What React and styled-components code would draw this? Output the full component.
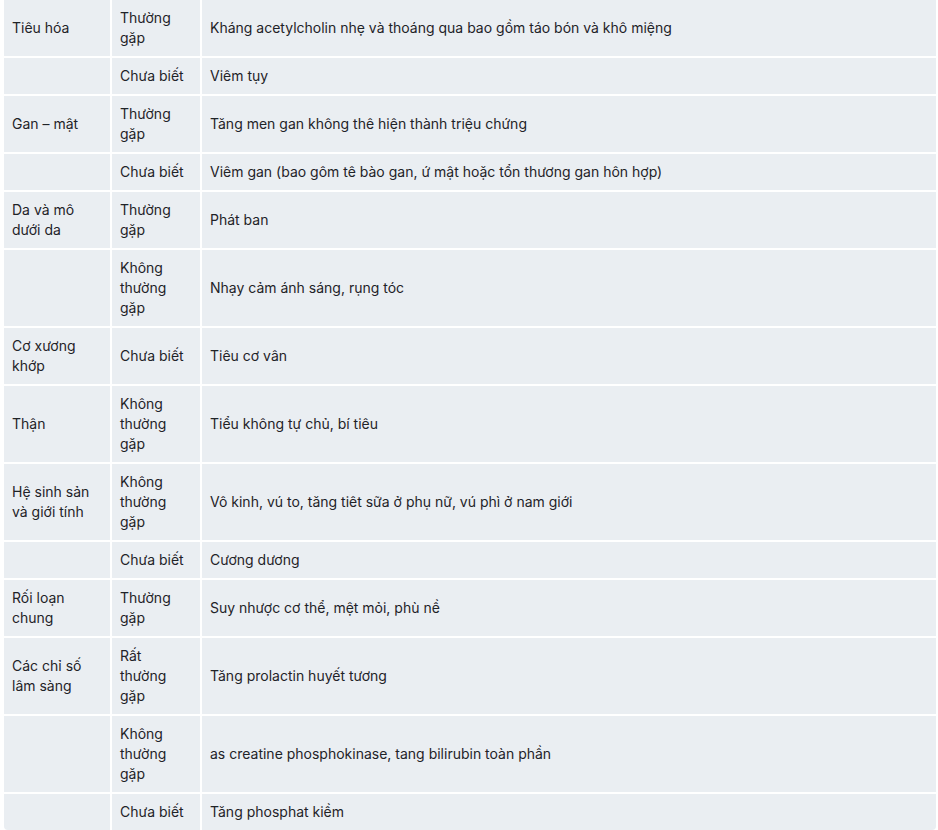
import React from "react";
import styled, { createGlobalStyle } from "styled-components";

const GlobalStyle = createGlobalStyle`
  html, body {
    margin: 0;
    padding: 0;
    background: #ffffff;
  }
  body {
    font-family: Inter, "Noto Sans", "Liberation Sans", sans-serif;
    -webkit-font-smoothing: antialiased;
  }
`;

const Table = styled.table`
  width: 936px;
  margin: -2px 0 0 2px;
  border-collapse: separate;
  border-spacing: 2px;
  table-layout: fixed;
  font-size: 14px;
  line-height: 20px;
  color: #1f2328;
`;

const Col = styled.col`
  width: ${(p) => (p.$width ? `${p.$width}px` : "auto")};
`;

const Cell = styled.td`
  background-color: #eaeef2;
  padding: 8px 10px 8px 8px;
  vertical-align: middle;
  text-align: left;

  tr:last-child > &:first-child {
    border-bottom-left-radius: 4px;
  }
  tr:last-child > &:last-child {
    border-bottom-right-radius: 4px;
  }
`;

const rows = [
  ["Tiêu hóa", "Thường gặp", "Kháng acetylcholin nhẹ và thoáng qua bao gồm táo bón và khô miệng"],
  ["", "Chưa biết", "Viêm tụy"],
  ["Gan – mật", "Thường gặp", "Tăng men gan không thê hiện thành triệu chứng"],
  ["", "Chưa biết", "Viêm gan (bao gôm tê bào gan, ứ mật hoặc tổn thương gan hôn hợp)"],
  ["Da và mô dưới da", "Thường gặp", "Phát ban"],
  ["", "Không thường gặp", "Nhạy cảm ánh sáng, rụng tóc"],
  ["Cơ xương khớp", "Chưa biết", "Tiêu cơ vân"],
  ["Thận", "Không thường gặp", "Tiểu không tự chủ, bí tiêu"],
  ["Hệ sinh sản và giới tính", "Không thường gặp", "Vô kinh, vú to, tăng tiêt sữa ở phụ nữ, vú phì ở nam giới"],
  ["", "Chưa biết", "Cương dương"],
  ["Rối loạn chung", "Thường gặp", "Suy nhược cơ thể, mệt mỏi, phù nề"],
  ["Các chỉ số lâm sàng", "Rất thường gặp", "Tăng prolactin huyết tương"],
  ["", "Không thường gặp", "as creatine phosphokinase, tang bilirubin toàn phần"],
  ["", "Chưa biết", "Tăng phosphat kiềm"],
];

const App = () => {
  return (
    <>
      <GlobalStyle />
      <Table>
        <colgroup>
          <Col $width={106} />
          <Col $width={88} />
          <Col />
        </colgroup>
        <tbody>
          {rows.map((row, i) => (
            <tr key={i}>
              {row.map((text, j) => (
                <Cell key={j}>{text}</Cell>
              ))}
            </tr>
          ))}
        </tbody>
      </Table>
    </>
  );
};

export default App;
